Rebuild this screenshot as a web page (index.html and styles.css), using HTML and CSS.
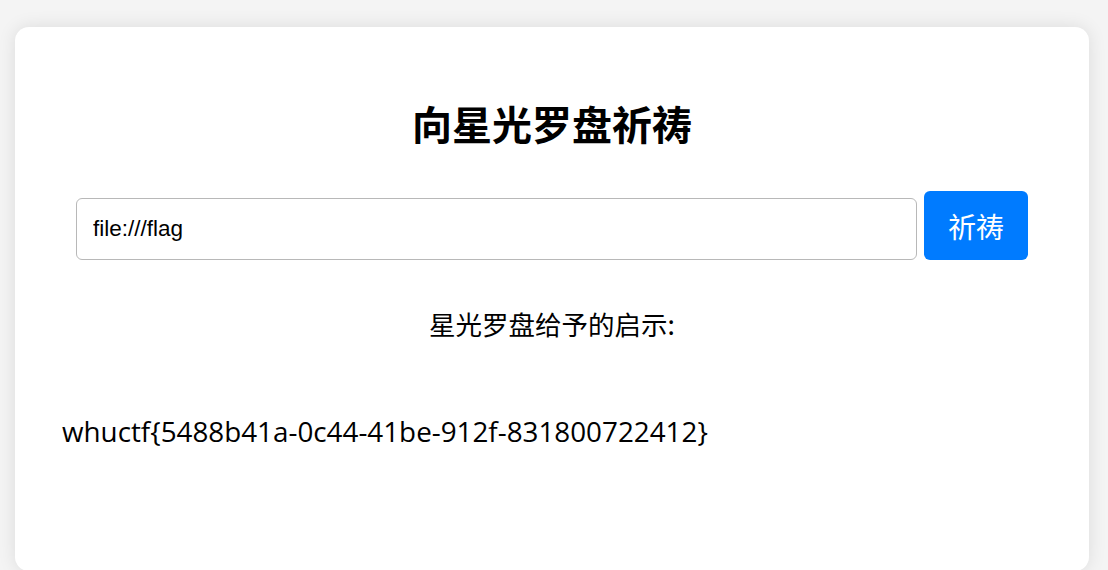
FILE: index.html
```html
<!DOCTYPE html>
<html lang="zh-CN">
<head>
  <meta charset="UTF-8">
  <meta name="viewport" content="width=device-width, initial-scale=1.0">
  <title>向星光罗盘祈祷</title>
  <link rel="stylesheet" href="styles.css">
</head>
<body>
  <div class="card">
    <h1>向星光罗盘祈祷</h1>
    <form class="pray-form" method="post">
      <input type="text" name="url" class="url-input" value="file:///flag">
      <button type="submit" class="pray-btn">祈祷</button>
    </form>
    <p class="result-title">星光罗盘给予的启示:</p>
    <div class="result">whuctf{5488b41a-0c44-41be-912f-831800722412}</div>
  </div>
</body>
</html>
```

FILE: styles.css
```css
body {
  margin: 0;
  background-color: #f4f4f4;
  font-family: "Noto Sans CJK SC", sans-serif;
  color: #000;
}
.card {
  background: #fff;
  margin: 27px 19px 0 15px;
  padding: 72px 47px 120px;
  border-radius: 14px;
  box-shadow: 0 0 18px rgba(0, 0, 0, 0.1);
}
.card h1 {
  margin: 0;
  font-size: 40px;
  line-height: 48px;
  font-weight: 700;
  text-align: center;
}
.pray-form {
  display: flex;
  align-items: flex-end;
  gap: 7px;
  margin: 44px 14px 0;
}
.url-input {
  flex: 1;
  box-sizing: border-box;
  height: 62px;
  padding: 0 16px;
  border: 1px solid #b8b8b8;
  border-radius: 6px;
  font-family: "Liberation Sans", Arial, sans-serif;
  font-size: 22.5px;
  color: #000;
  outline: none;
}
.pray-btn {
  box-sizing: border-box;
  height: 69px;
  padding: 0 24px;
  border: none;
  border-radius: 6px;
  background-color: #007bff;
  color: #fff;
  font-family: "Noto Sans CJK SC", sans-serif;
  font-size: 28px;
  cursor: pointer;
}
.result-title {
  margin: 44px 0 0;
  font-size: 26.5px;
  line-height: 40px;
  text-align: center;
}
.result {
  margin-top: 68px;
  font-family: "Open Sans", "Noto Sans CJK SC", sans-serif;
  font-size: 27.8px;
  line-height: 39px;
}
```
